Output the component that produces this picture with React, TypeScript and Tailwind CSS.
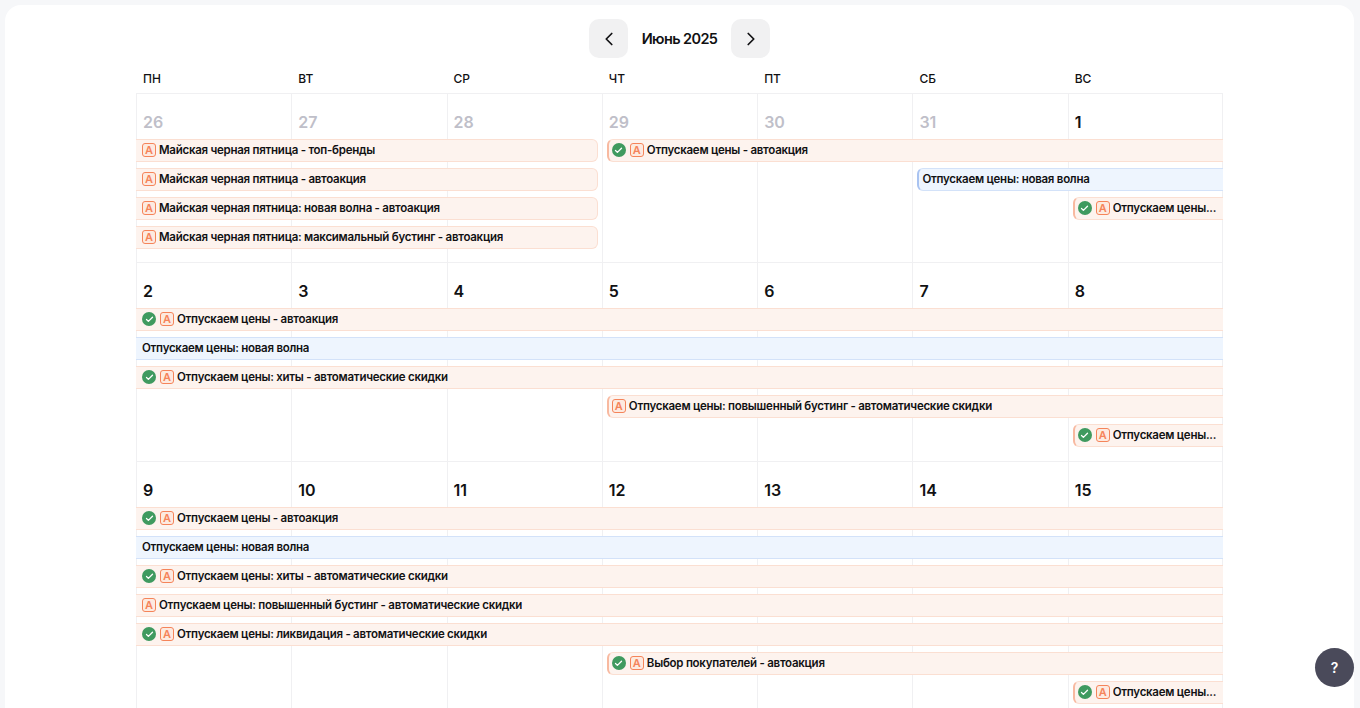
import { ChevronLeft, ChevronRight, Check } from 'lucide-react';

type Bar = {
  title: string;
  col: string;
  row: string;
  blue?: boolean;
  done?: boolean;
  auto?: boolean;
  starts?: boolean;
  ends?: boolean;
};

const weekdays = ['ПН', 'ВТ', 'СР', 'ЧТ', 'ПТ', 'СБ', 'ВС'];

const colClasses = ['col-start-1', 'col-start-2', 'col-start-3', 'col-start-4', 'col-start-5', 'col-start-6', 'col-start-7'];

const weeks: { rows: string; days: { n: number; muted?: boolean }[]; bars: Bar[] }[] = [
  {
    rows: 'grid-rows-[45px_repeat(4,29px)_7px]',
    days: [
      { n: 26, muted: true },
      { n: 27, muted: true },
      { n: 28, muted: true },
      { n: 29, muted: true },
      { n: 30, muted: true },
      { n: 31, muted: true },
      { n: 1 },
    ],
    bars: [
      { title: 'Майская черная пятница - топ-бренды', col: 'col-start-1 col-span-3', row: 'row-start-2', auto: true, ends: true },
      { title: 'Майская черная пятница - автоакция', col: 'col-start-1 col-span-3', row: 'row-start-3', auto: true, ends: true },
      { title: 'Майская черная пятница: новая волна - автоакция', col: 'col-start-1 col-span-3', row: 'row-start-4', auto: true, ends: true },
      { title: 'Майская черная пятница: максимальный бустинг - автоакция', col: 'col-start-1 col-span-3', row: 'row-start-5', auto: true, ends: true },
      { title: 'Отпускаем цены - автоакция', col: 'col-start-4 col-span-4', row: 'row-start-2', done: true, auto: true, starts: true },
      { title: 'Отпускаем цены: новая волна', col: 'col-start-6 col-span-2', row: 'row-start-3', blue: true, starts: true },
      { title: 'Отпускаем цены...', col: 'col-start-7 col-span-1', row: 'row-start-4', done: true, auto: true, starts: true },
    ],
  },
  {
    rows: 'grid-rows-[45px_repeat(5,29px)_8px]',
    days: [{ n: 2 }, { n: 3 }, { n: 4 }, { n: 5 }, { n: 6 }, { n: 7 }, { n: 8 }],
    bars: [
      { title: 'Отпускаем цены - автоакция', col: 'col-start-1 col-span-7', row: 'row-start-2', done: true, auto: true },
      { title: 'Отпускаем цены: новая волна', col: 'col-start-1 col-span-7', row: 'row-start-3', blue: true },
      { title: 'Отпускаем цены: хиты - автоматические скидки', col: 'col-start-1 col-span-7', row: 'row-start-4', done: true, auto: true },
      { title: 'Отпускаем цены: повышенный бустинг - автоматические скидки', col: 'col-start-4 col-span-4', row: 'row-start-5', auto: true, starts: true },
      { title: 'Отпускаем цены...', col: 'col-start-7 col-span-1', row: 'row-start-6', done: true, auto: true, starts: true },
    ],
  },
  {
    rows: 'grid-rows-[45px_repeat(7,29px)_7px]',
    days: [{ n: 9 }, { n: 10 }, { n: 11 }, { n: 12 }, { n: 13 }, { n: 14 }, { n: 15 }],
    bars: [
      { title: 'Отпускаем цены - автоакция', col: 'col-start-1 col-span-7', row: 'row-start-2', done: true, auto: true },
      { title: 'Отпускаем цены: новая волна', col: 'col-start-1 col-span-7', row: 'row-start-3', blue: true },
      { title: 'Отпускаем цены: хиты - автоматические скидки', col: 'col-start-1 col-span-7', row: 'row-start-4', done: true, auto: true },
      { title: 'Отпускаем цены: повышенный бустинг - автоматические скидки', col: 'col-start-1 col-span-7', row: 'row-start-5', auto: true },
      { title: 'Отпускаем цены: ликвидация - автоматические скидки', col: 'col-start-1 col-span-7', row: 'row-start-6', done: true, auto: true },
      { title: 'Выбор покупателей - автоакция', col: 'col-start-4 col-span-4', row: 'row-start-7', done: true, auto: true, starts: true },
      { title: 'Отпускаем цены...', col: 'col-start-7 col-span-1', row: 'row-start-8', done: true, auto: true, starts: true },
    ],
  },
];

function EventBar({ bar }: { bar: Bar }) {
  const tone = bar.blue ? 'bg-[#eef5fe] border-[#d3e2f9]' : 'bg-[#fdf3ee] border-[#fbdfd2]';
  const startTone = bar.blue ? 'border-l-[#a9c3f1]' : 'border-l-[#f8b9a0]';
  return (
    <div
      className={`${bar.col} ${bar.row} ${tone} z-10 flex h-[22.5px] min-w-0 items-center border text-[11.5px] font-semibold tracking-[-0.26px] text-[#111113] ${
        bar.starts ? `ml-[5px] rounded-l-[6px] border-l-2 pl-[3px] ${startTone}` : 'border-l-0 pl-[6px]'
      } ${bar.ends ? 'mr-1 rounded-r-[6px]' : 'border-r-0'}`}
    >
      {bar.done && (
        <span className="mr-1 flex h-[14px] w-[14px] shrink-0 items-center justify-center rounded-full bg-[#3f9a5f]">
          <Check size={9} strokeWidth={3.5} className="text-white" />
        </span>
      )}
      {bar.auto && (
        <span className="mr-[3px] flex h-[14px] w-[14px] shrink-0 items-center justify-center rounded-[3px] border-[1.5px] border-[#f5845a] bg-[#fdeae0] text-[11px] leading-none font-semibold tracking-normal text-[#f5845a]">
          A
        </span>
      )}
      <span className="truncate whitespace-nowrap">{bar.title}</span>
    </div>
  );
}

export default function App() {
  return (
    <div className="h-[708px] overflow-hidden bg-[#f6f7f9] pt-[5px] pr-[6px] pl-[5px] font-['Inter','Noto_Sans',sans-serif] text-[#111113]">
      <div className="h-[720px] rounded-t-[16px] bg-white pt-[14px]">
        <div className="flex items-center justify-center">
          <button type="button" className="flex h-[39px] w-[39px] items-center justify-center rounded-[10px] bg-[#f1f1f2]">
            <ChevronLeft size={22} strokeWidth={1.9} />
          </button>
          <div className="w-[103px] text-center text-[14.5px] font-semibold tracking-[-0.6px]">Июнь 2025</div>
          <button type="button" className="flex h-[39px] w-[39px] items-center justify-center rounded-[10px] bg-[#f1f1f2]">
            <ChevronRight size={22} strokeWidth={1.9} />
          </button>
        </div>

        <div className="mx-auto w-[1087px]">
          <div className="grid h-[35px] grid-cols-7 items-center pt-[7px]">
            {weekdays.map((d) => (
              <div key={d} className="pl-[7px] text-[12px] font-medium">
                {d}
              </div>
            ))}
          </div>

          <div className="border-t border-[#f0f0f2]">
            {weeks.map((week) => (
              <div key={week.days[0].n} className={`grid grid-cols-7 border-b border-[#f0f0f2] ${week.rows}`}>
                {week.days.map((day, i) => (
                  <div
                    key={day.n}
                    className={`${colClasses[i]} row-span-full border-l border-[#f0f0f2] ${i === 6 ? 'border-r' : ''}`}
                  >
                    <div
                      className={`pt-[17px] pl-[6px] text-[16px] leading-[22px] font-semibold ${
                        day.muted ? 'text-[#bfbfc9]' : 'text-[#111113]'
                      }`}
                    >
                      {day.n}
                    </div>
                  </div>
                ))}
                {week.bars.map((bar) => (
                  <EventBar key={`${bar.row}-${bar.col}`} bar={bar} />
                ))}
              </div>
            ))}
          </div>
        </div>
      </div>

      <button
        type="button"
        className="absolute top-[648px] left-[1315px] z-20 flex h-[39px] w-[39px] items-center justify-center rounded-full bg-[#4a4a5a] text-[14px] font-semibold text-white"
      >
        ?
      </button>
    </div>
  );
}
